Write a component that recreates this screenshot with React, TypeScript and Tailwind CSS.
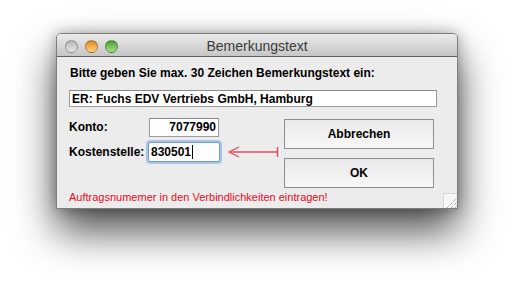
import { ReactNode } from 'react';

const font = { fontFamily: '"Liberation Sans", Arial, sans-serif' };

function Light({ color }: { color: string }) {
  return (
    <div
      className={`w-[13px] h-[13px] rounded-full border border-black/30 ${color}`}
    />
  );
}

function TextBox({ children, className }: { children: ReactNode; className?: string }) {
  return (
    <div
      className={`bg-white border border-[#9c9c9c] border-t-[#8a8a8a] flex items-center text-[12px] font-bold text-black leading-none ${className ?? ''}`}
    >
      {children}
    </div>
  );
}

function Button({ label }: { label: string }) {
  return (
    <button
      type="button"
      className="w-[150px] h-[30px] border border-[#8e8e8e] bg-gradient-to-b from-[#e9e9e9] to-[#f7f7f7] text-[12px] font-bold text-black"
    >
      {label}
    </button>
  );
}

export default function App() {
  return (
    <div className="w-[514px] h-[287px] bg-white pt-[33px] pl-[56px] overflow-hidden" style={font}>
      <div className="w-[402px] h-[176px] rounded-t-[5px] border border-[#7d7d7d] bg-[#ececec] shadow-[0_22px_42px_rgba(0,0,0,0.7),0_0_14px_rgba(0,0,0,0.3)] flex flex-col">
        {/* title bar */}
        <div className="relative h-[23px] rounded-t-[4px] bg-gradient-to-b from-[#ebebeb] to-[#c6c6c6] border-b border-[#5f5f5f] flex items-center pl-[8px] pt-[2px] gap-[7px]">
          <Light color="bg-gradient-to-b from-[#b8b8b8] to-[#e6e6e6]" />
          <Light color="bg-gradient-to-b from-[#e08a1a] to-[#fcd27a]" />
          <Light color="bg-gradient-to-b from-[#4a9e2c] to-[#a9e288]" />
          <div className="absolute inset-0 flex items-center justify-center pt-[2px] text-[14px] text-[#3b3b3b]">
            Bemerkungstext
          </div>
        </div>

        {/* body */}
        <div className="relative flex-1 flex flex-col pl-[12px] pt-[9px]">
          <div className="pl-[1px] text-[12px] font-bold text-black leading-[14px]">
            Bitte geben Sie max. 30 Zeichen Bemerkungstext ein:
          </div>
          <TextBox className="mt-[10px] w-[368px] h-[17px] pl-[2px]">
            ER: Fuchs EDV Vertriebs GmbH, Hamburg
          </TextBox>

          <div className="flex mt-[11px]">
            <div className="flex flex-col w-[215px]">
              <div className="flex items-center h-[20px] mt-[-1px]">
                <span className="w-[80px] text-[12px] font-bold">Konto:</span>
                <TextBox className="w-[70px] h-[19px] justify-end pr-[2px]">7077990</TextBox>
              </div>
              <div className="flex items-center h-[20px] mt-[5px]">
                <span className="w-[79px] text-[12px] font-bold">Kostenstelle:</span>
                <div className="w-[72px] h-[20px] rounded-[2px] bg-white border border-[#6d9bd6] shadow-[0_0_0_2px_rgba(120,165,225,0.55)] flex items-center pl-[2px] text-[12px] font-bold leading-none">
                  830501
                  <span className="ml-[1px] w-[1px] h-[14px] bg-black" />
                </div>
                <svg width="52" height="12" viewBox="0 0 52 12" className="ml-[8px]">
                  <path d="M1 6 H49" stroke="#e5505e" strokeWidth="1.3" fill="none" />
                  <path d="M11 1 L1 6 L11 11" stroke="#e5505e" strokeWidth="1.3" fill="none" />
                  <path d="M49.5 1 V11" stroke="#e5505e" strokeWidth="1.5" fill="none" />
                </svg>
              </div>
            </div>
            <div className="flex flex-col gap-[9px] mt-[1px]">
              <Button label="Abbrechen" />
              <Button label="OK" />
            </div>
          </div>

          <div className="mt-[3px] text-[11px] text-[#ea0a24] leading-[13px]">
            Auftragsnumemer in den Verbindlichkeiten eintragen!
          </div>

          {/* resize grip */}
          <div className="absolute right-0 bottom-0 w-[14px] h-[15px] bg-[#f6f6f6] border-l border-t border-[#d8d8d8]">
            <svg width="14" height="15" viewBox="0 0 14 15">
              <path d="M3 14 L13 4 M7 14 L13 8 M11 14 L13 12" stroke="#8a8a8a" strokeWidth="1" strokeDasharray="1 1" />
            </svg>
          </div>
        </div>
      </div>
    </div>
  );
}
